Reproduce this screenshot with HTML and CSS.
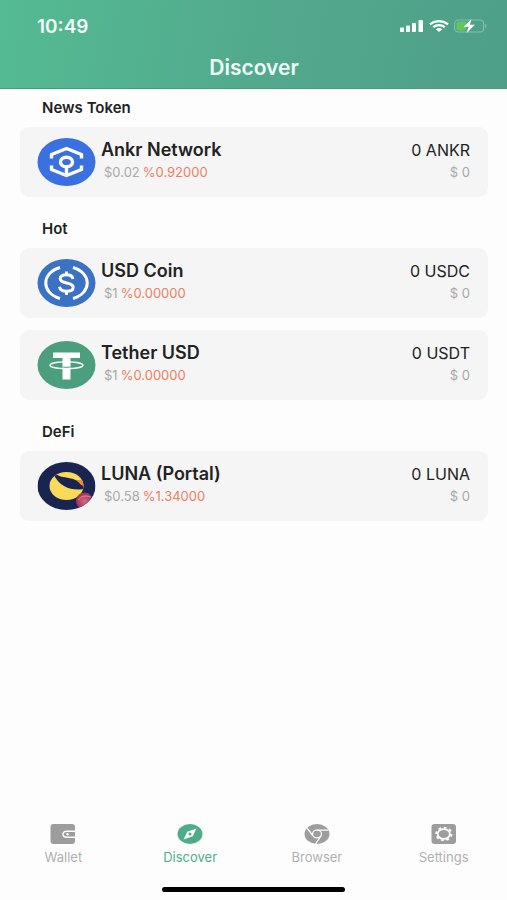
FILE: index.html
```html
<!DOCTYPE html>
<html lang="en">
<head>
<meta charset="utf-8">
<meta name="viewport" content="width=device-width, initial-scale=1">
<title>Discover</title>
<link rel="stylesheet" href="styles.css">
</head>
<body>
<header class="header">
  <div class="status">
    <time>10:49</time>
    <div class="status-icons">
      <svg width="24" height="12" viewBox="0 0 24 12" fill="#fff" aria-hidden="true">
        <rect x="0" y="7.5" width="4" height="4.5" rx="1"/><rect x="6" y="5.5" width="4" height="6.500" rx="1"/><rect x="12" y="3" width="4" height="9" rx="1"/><rect x="18.500" y="0" width="4.500" height="12" rx="1"/>
      </svg>
      <svg width="20" height="12" viewBox="0 0 20 12" fill="none" stroke="#fff" stroke-width="2.200" aria-hidden="true">
        <path d="M1 4.300C6 0 14 0 19 4.300M4.200 7.200c3.300-2.800 8.300-2.800 11.600 0"/><path d="M6.800 9.200c2-1.600 4.400-1.600 6.400 0L10 12z" fill="#fff" stroke="none"/>
      </svg>
      <svg width="33" height="14" viewBox="0 0 33 14" aria-hidden="true">
        <rect x=".6" y="1" width="29" height="12" rx="3.500" fill="none" stroke="#84bfad" stroke-width="1.100"/>
        <path d="M31 5v4c2-.8 2-3.200 0-4z" fill="#84bfad"/>
        <rect x="2.500" y="2.600" width="10" height="8.800" rx="2" fill="#62c55f"/>
        <path d="M17.500 0L9.800 7.800h4.700L12.700 14l8.100-8.200h-5z" fill="#fff"/>
      </svg>
    </div>
  </div>
  <h1>Discover</h1>
</header>

<main>
  <section>
    <h2>News Token</h2>
    <article class="card">
      <svg class="coin" viewBox="0 0 58 48" aria-hidden="true">
        <ellipse cx="29" cy="24" rx="29" ry="24" fill="#3a70e0"/>
        <g fill="none" stroke="#fff" stroke-width="3.400" stroke-linejoin="round">
          <path d="M14 20.500v-4l15-6 15 6v4M14 27.500v4l15 6 15-6v-4M29 29v8"/>
          <ellipse cx="29" cy="24" rx="6" ry="4.800"/>
        </g>
      </svg>
      <div class="info"><h3>Ankr Network</h3><p><span>$0.02</span> <span class="change">%0.92000</span></p></div>
      <div class="balance"><strong>0 ANKR</strong><span>$ 0</span></div>
    </article>
  </section>

  <section>
    <h2>Hot</h2>
    <article class="card">
      <svg class="coin" viewBox="0 0 58 48" aria-hidden="true">
        <ellipse cx="29" cy="24" rx="29" ry="24" fill="#3b72c4"/>
        <g fill="none" stroke="#fff" stroke-width="3">
          <path d="M22.500 8.500C3.500 14 3.500 34 22.500 39.500M35.500 8.500c19 5.500 19 25.500 0 31"/>
          <path d="M35.500 20c-.5-2.800-3-4.200-6.500-4.200-3.800 0-6.300 1.500-6.300 4 0 5.700 13 2.500 13 8.400 0 2.600-2.700 4-6.700 4s-6.500-1.600-7-4.500M29 12.500v4M29 32v4"/>
        </g>
      </svg>
      <div class="info"><h3>USD Coin</h3><p><span>$1</span> <span class="change">%0.00000</span></p></div>
      <div class="balance"><strong>0 USDC</strong><span>$ 0</span></div>
    </article>
    <article class="card">
      <svg class="coin" viewBox="0 0 58 48" aria-hidden="true">
        <ellipse cx="29" cy="24" rx="29" ry="24" fill="#4b9f7e"/>
        <path d="M15.500 11.500h27V17H33v21.500h-8V17h-9.500z" fill="#fff"/>
        <path d="M25 25.500c3 .3 5 .3 8 0v1c-3 .3-5 .3-8 0z" fill="#4b9f7e"/>
        <ellipse cx="29" cy="24.200" rx="16.500" ry="3.400" fill="none" stroke="#fff" stroke-width="1.300"/>
      </svg>
      <div class="info"><h3>Tether USD</h3><p><span>$1</span> <span class="change">%0.00000</span></p></div>
      <div class="balance"><strong>0 USDT</strong><span>$ 0</span></div>
    </article>
  </section>

  <section>
    <h2>DeFi</h2>
    <article class="card">
      <svg class="coin" viewBox="0 0 58 48" aria-hidden="true">
        <defs>
          <clipPath id="disc"><ellipse cx="29" cy="24" rx="29" ry="24"/></clipPath>
          <clipPath id="moon"><ellipse cx="29" cy="24" rx="17" ry="14"/></clipPath>
          <radialGradient id="planet"><stop offset="0" stop-color="#d66a80"/><stop offset="1" stop-color="#9b2f58"/></radialGradient>
        </defs>
        <g clip-path="url(#disc)">
          <rect width="58" height="48" fill="#192451"/>
          <ellipse cx="29" cy="24" rx="17" ry="14" fill="#f9da59"/>
          <g clip-path="url(#moon)">
            <path d="M37 18c4 1 6 4 9 7l2-1-3-6z" fill="#ee8d35"/>
            <path d="M16 12l4 1c5 3 12 2 18 5 4 2 5 5 8 6v3c-10 2-24-1-30-15z" fill="#192451"/>
          </g>
          <circle cx="47" cy="39" r="8.500" fill="url(#planet)"/>
          <path d="M41 38c2-4 7-5 12-3" fill="none" stroke="#e58a97"/>
        </g>
      </svg>
      <div class="info"><h3>LUNA (Portal)</h3><p><span>$0.58</span> <span class="change">%1.34000</span></p></div>
      <div class="balance"><strong>0 LUNA</strong><span>$ 0</span></div>
    </article>
  </section>
</main>

<nav class="tabs">
  <a href="#wallet">
    <svg width="26" height="20" viewBox="0 0 26 20" aria-hidden="true">
      <rect x=".5" width="24.500" height="20" rx="3" fill="#9d9d9d"/>
      <path d="M26 7.200h-9c-5.300 0-5.300 6 0 6h9" fill="none" stroke="#fdfdfd" stroke-width="1.500"/><circle cx="17.500" cy="10.200" r="1.200" fill="#fdfdfd"/>
    </svg>
    Wallet
  </a>
  <a href="#discover" class="active" aria-current="page">
    <svg width="26" height="20" viewBox="0 0 26 20" aria-hidden="true">
      <ellipse cx="13" cy="10" rx="12.500" ry="10" fill="#4dad8a"/>
      <path d="M19.500 4.500l-3.800 7.700-9.200 3.300 3.800-7.700z" fill="#fdfdfd"/><circle cx="13" cy="10" r="1.500" fill="#4dad8a"/>
    </svg>
    Discover
  </a>
  <a href="#browser">
    <svg width="26" height="20" viewBox="0 0 26 20" aria-hidden="true">
      <ellipse cx="13" cy="10" rx="12.500" ry="10" fill="#9d9d9d"/>
      <g fill="none" stroke="#fdfdfd" stroke-width="1.300"><ellipse cx="13" cy="10" rx="4.500" ry="3.800"/><path d="M13 6.200h11.500M8.700 11.500L3 4M17.300 11.500L11.500 20"/></g>
    </svg>
    Browser
  </a>
  <a href="#settings">
    <svg width="26" height="20" viewBox="0 0 26 20" aria-hidden="true">
      <rect x=".5" width="24.500" height="20" rx="3" fill="#9d9d9d"/>
      <ellipse cx="12.800" cy="10" rx="7.600" ry="6.300" fill="none" stroke="#fdfdfd" stroke-width="2" pathLength="80" stroke-dasharray="5 5"/>
      <ellipse cx="12.800" cy="10" rx="6.100" ry="4.900" fill="none" stroke="#fdfdfd" stroke-width="1.800"/>
    </svg>
    Settings
  </a>
</nav>
<div class="home-bar"></div>
</body>
</html>
```
FILE: styles.css
```css
* {
  box-sizing: border-box;
}

body {
  display: flex;
  flex-direction: column;
  min-height: 100vh;
  margin: 0;
  background: #fdfdfd;
  color: #222;
  font-family: Inter, "Liberation Sans", sans-serif;
}

h1, h2, h3, p {
  margin: 0;
}

.header {
  padding: 14px 20px 8px 37px;
  background: linear-gradient(100deg, #54bb93, #52aa8d 50%, #4e9f88);
  border-bottom: 1px solid #499b80;
  color: #effcf7;
}

.status {
  display: flex;
  align-items: center;
  justify-content: space-between;
  height: 24px;
  font-size: 19px;
  font-weight: 600;
}

.status-icons {
  display: flex;
  align-items: center;
  gap: 5px;
}

h1 {
  margin: 18px 16px 0 0;
  font-size: 21px;
  line-height: 24px;
  font-weight: 600;
  text-align: center;
}

main {
  flex: 1;
  padding: 0 19px 0 20px;
}

section {
  margin-bottom: 13px;
}

h2 {
  padding-left: 22px;
  font-size: 15px;
  line-height: 38px;
  font-weight: 600;
}

.card {
  display: flex;
  align-items: center;
  height: 70px;
  padding: 0 18px 0 17px;
  border-radius: 9px;
  background: #f5f5f5;
}

.card + .card {
  margin-top: 12px;
}

.coin {
  flex: none;
  width: 59px;
  height: 48px;
}

.info,
.balance {
  padding-bottom: 4px;
}

.info {
  flex: 1;
  padding-left: 5px;
}

h3 {
  font-size: 18px;
  line-height: 24px;
  font-weight: 600;
}

.info p {
  display: flex;
  gap: 3px;
  padding-left: 3px;
}

.info p,
.balance span {
  color: #a9a9a9;
  font-size: 13px;
  line-height: 20px;
}

.info .change {
  color: #ee805f;
}

.balance {
  display: flex;
  flex-direction: column;
  text-align: right;
}

.balance strong {
  font-size: 16px;
  line-height: 24px;
  font-weight: 400;
}

.tabs {
  display: grid;
  grid-template-columns: repeat(4, 1fr);
}

.tabs a {
  display: flex;
  flex-direction: column;
  align-items: center;
  gap: 4px;
  color: #b0b0b0;
  font-size: 13px;
  line-height: 18px;
  text-decoration: none;
}

.tabs .active {
  color: #4dad8a;
}

.home-bar {
  width: 36%;
  height: 5px;
  margin: 21px auto 8px;
  border-radius: 3px;
  background: #000;
}
```
